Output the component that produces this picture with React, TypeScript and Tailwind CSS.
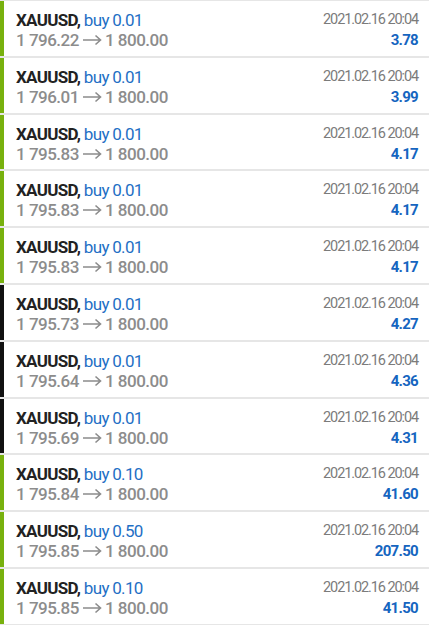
import React from "react";

type Deal = {
    volume: string;
    open: string;
    profit: string;
    dark?: boolean;
};

const deals: Deal[] = [
    { volume: "0.01", open: "1 796.22", profit: "3.78" },
    { volume: "0.01", open: "1 796.01", profit: "3.99" },
    { volume: "0.01", open: "1 795.83", profit: "4.17" },
    { volume: "0.01", open: "1 795.83", profit: "4.17" },
    { volume: "0.01", open: "1 795.83", profit: "4.17" },
    { volume: "0.01", open: "1 795.73", profit: "4.27", dark: true },
    { volume: "0.01", open: "1 795.64", profit: "4.36", dark: true },
    { volume: "0.01", open: "1 795.69", profit: "4.31", dark: true },
    { volume: "0.10", open: "1 795.84", profit: "41.60" },
    { volume: "0.50", open: "1 795.85", profit: "207.50" },
    { volume: "0.10", open: "1 795.85", profit: "41.50" },
];

function Arrow() {
    return (
        <svg width="20" height="12" viewBox="0 0 20 12" className="mx-[3px] inline-block" fill="none">
            <path d="M1 6H18.5M13.5 1.5L18.5 6L13.5 10.5" stroke="#8c8c8c" strokeWidth="1.6" />
        </svg>
    );
}

function DealRow({ deal }: { deal: Deal }) {
    return (
        <div className="flex h-[56.8px] border-b-2 border-[#e6e6e6] bg-white">
            <div className={deal.dark ? "w-[4px] bg-[#111111]" : "w-[4px] bg-[#78b10e]"} />
            <div className="flex flex-1 justify-between pl-[12px] pr-[11px] pt-[9px]">
                <div className="flex flex-col">
                    <span className="text-[17px] leading-[20px] tracking-[-0.7px]">
                        <span className="font-bold text-[#222222]">XAUUSD, </span>
                        <span className="text-[#1f6fc5]">buy {deal.volume}</span>
                    </span>
                    <span className="flex items-center text-[17px] leading-[20px] font-medium text-[#8c8c8c] tracking-[-0.5px]">
                        <span>{deal.open}</span>
                        <Arrow />
                        <span>1 800.00</span>
                    </span>
                </div>
                <div className="flex flex-col items-end">
                    <span className="text-[14.5px] leading-[20px] text-[#7b7b7b] tracking-[-1.1px]">2021.02.16 20:04</span>
                    <span className="text-[15px] leading-[20px] font-bold text-[#1565c0] tracking-[-0.7px]">{deal.profit}</span>
                </div>
            </div>
        </div>
    );
}

export default function App() {
    return (
        <div className="w-[429px] h-[625px] overflow-hidden bg-white border-t border-[#e6e6e6]" style={{ fontFamily: "Roboto, sans-serif" }}>
            {deals.map((deal, index) => (
                <DealRow key={index} deal={deal} />
            ))}
        </div>
    );
}
